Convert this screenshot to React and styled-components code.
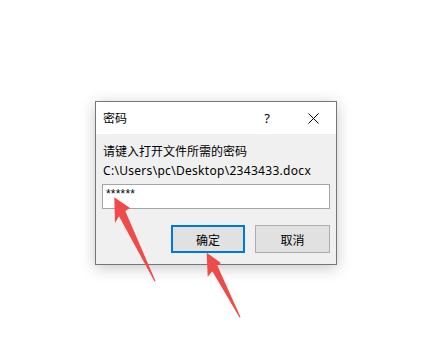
import React from "react";
import styled, { createGlobalStyle } from "styled-components";

const GlobalStyle = createGlobalStyle`
  html, body {
    margin: 0;
    padding: 0;
    background: #ffffff;
  }
  body {
    font-family: "Noto Sans", "Noto Sans CJK SC", sans-serif;
    font-size: 12px;
    color: #000;
  }
`;

const Page = styled.div`
  position: relative;
  width: 427px;
  height: 339px;
  box-sizing: border-box;
  padding: 101px 0 0 95px;
  overflow: hidden;
`;

const Dialog = styled.div`
  width: 242px;
  height: 164px;
  box-sizing: border-box;
  border: 1px solid #767676;
  background: #f0f0f0;
  box-shadow: 0 3px 14px rgba(0, 0, 0, 0.22);
  display: flex;
  flex-direction: column;
`;

const TitleBar = styled.div`
  height: 32px;
  background: #ffffff;
  display: flex;
  align-items: center;
  padding-left: 7px;
`;

const Title = styled.div`
  flex: 1;
  font-family: "Noto Sans CJK SC", sans-serif;
  font-size: 12px;
  line-height: 16px;
`;

const CaptionButton = styled.div`
  width: 46px;
  height: 32px;
  display: flex;
  align-items: center;
  justify-content: center;
  font-family: "Noto Sans", sans-serif;
  font-size: 13px;
`;

const Body = styled.div`
  flex: 1;
  display: flex;
  flex-direction: column;
  padding: 7px 6px 0 6px;
`;

const Line = styled.div`
  padding-left: 1px;
  line-height: 20px;
  font-family: ${(p) =>
    p.$latin ? '"Noto Sans", sans-serif' : '"Noto Sans CJK SC", sans-serif'};
  font-size: 12px;
  white-space: nowrap;
  letter-spacing: ${(p) => (p.$latin ? "0.3px" : "0")};
`;

const PasswordBox = styled.div`
  margin-top: 3px;
  height: 25px;
  box-sizing: border-box;
  border: 1px solid #a5a5a5;
  background: #ffffff;
  padding: 2px 3px 0;
  font-family: "Liberation Sans", sans-serif;
  font-size: 12px;
  line-height: 14px;
  letter-spacing: 0.2px;
`;

const ButtonRow = styled.div`
  margin-top: 16px;
  display: flex;
  justify-content: flex-end;
  gap: 10px;
`;

const Button = styled.div`
  width: ${(p) => (p.$primary ? "74px" : "75px")};
  height: 28px;
  box-sizing: border-box;
  border: ${(p) => (p.$primary ? "2px solid #0078d7" : "1px solid #adadad")};
  background: #e1e1e1;
  display: flex;
  align-items: center;
  justify-content: center;
  font-family: "Noto Sans CJK SC", sans-serif;
  font-size: 12px;
`;

const Overlay = styled.svg`
  position: absolute;
  left: 0;
  top: 0;
  pointer-events: none;
`;

function CloseIcon() {
  return (
    <svg width="11" height="11" viewBox="0 0 11 11">
      <path d="M0.5 0.5 L10.5 10.5 M10.5 0.5 L0.5 10.5" stroke="#000" strokeWidth="1" />
    </svg>
  );
}

function App() {
  return (
    <Page>
      <GlobalStyle />
      <Dialog>
        <TitleBar>
          <Title>密码</Title>
          <CaptionButton>?</CaptionButton>
          <CaptionButton>
            <CloseIcon />
          </CaptionButton>
        </TitleBar>
        <Body>
          <Line>请键入打开文件所需的密码</Line>
          <Line $latin>C:\Users\pc\Desktop\2343433.docx</Line>
          <PasswordBox>******</PasswordBox>
          <ButtonRow>
            <Button $primary>确定</Button>
            <Button>取消</Button>
          </ButtonRow>
        </Body>
      </Dialog>

      {/* red annotation arrows drawn on top of the screenshot */}
      <Overlay width="427" height="339" viewBox="0 0 427 339">
        <polygon
          points="114.3,197.3 130,208 125.3,211 155.5,281 154.5,281.5 119,216.2 115,223"
          fill="#ee4b4b"
        />
        <polygon
          points="206.7,252.7 221,263 217.2,265.3 240.5,317 239.5,317.5 212.3,271.2 207.7,276.7"
          fill="#ee4b4b"
        />
      </Overlay>
    </Page>
  );
}

export default App;
